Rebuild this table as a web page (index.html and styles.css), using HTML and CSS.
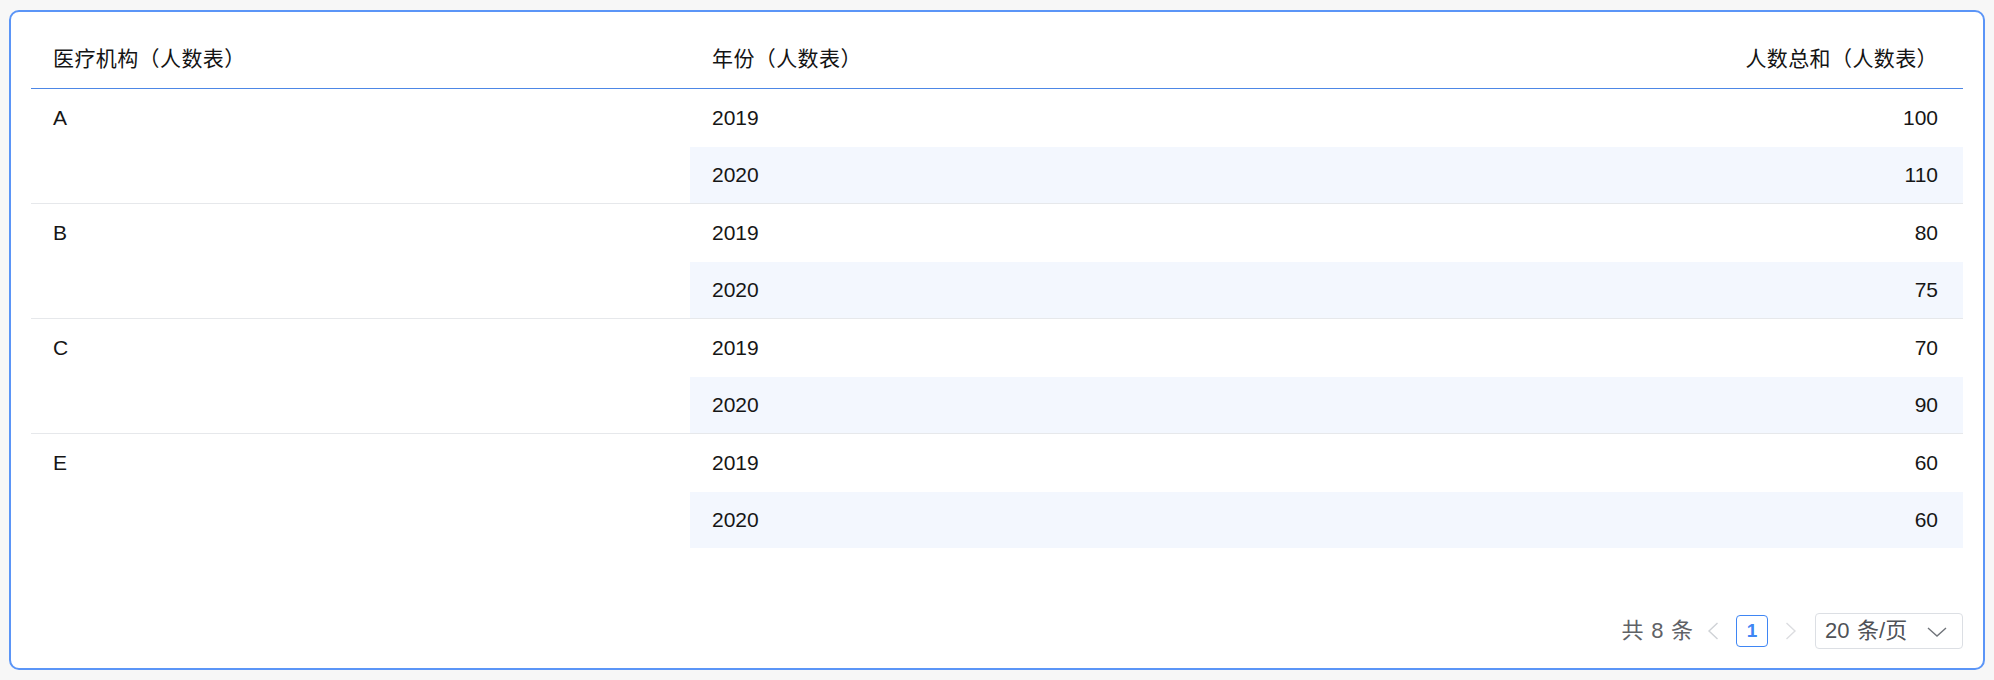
FILE: index.html
```html
<!DOCTYPE html>
<html lang="zh-CN">
<head>
<meta charset="utf-8">
<title>人数表</title>
<link rel="stylesheet" href="styles.css">
</head>
<body>
<div class="card">
  <table class="data-table">
    <colgroup>
      <col class="col-org">
      <col class="col-year">
      <col class="col-sum">
    </colgroup>
    <thead>
      <tr>
        <th class="cell">医疗机构（人数表）</th>
        <th class="cell">年份（人数表）</th>
        <th class="cell num">人数总和（人数表）</th>
      </tr>
    </thead>
    <tbody>
      <tr class="first">
        <td class="cell org" rowspan="2">A</td>
        <td class="cell">2019</td>
        <td class="cell num">100</td>
      </tr>
      <tr class="stripe">
        <td class="cell">2020</td>
        <td class="cell num">110</td>
      </tr>
      <tr class="first">
        <td class="cell org" rowspan="2">B</td>
        <td class="cell">2019</td>
        <td class="cell num">80</td>
      </tr>
      <tr class="stripe">
        <td class="cell">2020</td>
        <td class="cell num">75</td>
      </tr>
      <tr class="first">
        <td class="cell org" rowspan="2">C</td>
        <td class="cell">2019</td>
        <td class="cell num">70</td>
      </tr>
      <tr class="stripe">
        <td class="cell">2020</td>
        <td class="cell num">90</td>
      </tr>
      <tr class="first">
        <td class="cell org last" rowspan="2">E</td>
        <td class="cell">2019</td>
        <td class="cell num">60</td>
      </tr>
      <tr class="stripe last">
        <td class="cell">2020</td>
        <td class="cell num">60</td>
      </tr>
    </tbody>
  </table>

  <div class="pager">
    <span class="total">共 8 条</span>
    <button class="arrow prev" type="button" aria-label="上一页">
      <svg width="12" height="18" viewBox="0 0 12 18"><path d="M10.5 1 L2 9 L10.5 17" fill="none" stroke="currentColor" stroke-width="1.4"/></svg>
    </button>
    <span class="page current">1</span>
    <button class="arrow next" type="button" aria-label="下一页">
      <svg width="12" height="18" viewBox="0 0 12 18"><path d="M1.5 1 L10 9 L1.5 17" fill="none" stroke="currentColor" stroke-width="1.4"/></svg>
    </button>
    <div class="size-select">
      <span class="size-label">20 条/页</span>
      <svg class="caret" width="20" height="10" viewBox="0 0 20 10"><path d="M1 1 L10 9 L19 1" fill="none" stroke="currentColor" stroke-width="1.4"/></svg>
    </div>
  </div>
</div>
</body>
</html>
```

FILE: styles.css
```css
html, body {
  margin: 0;
  height: 100%;
  background: #f7f7f7;
}

body {
  font-family: "Liberation Sans", "Noto Sans CJK SC", sans-serif;
  color: #161616;
  text-spacing-trim: space-all;
}

.card {
  box-sizing: border-box;
  height: calc(100vh - 20px);
  margin: 10px 9px;
  border: 2px solid #5b95f7;
  border-radius: 10px;
  background: #ffffff;
  padding: 19px 20px;
  display: flex;
  flex-direction: column;
}

.data-table {
  width: 100%;
  border-collapse: separate;
  border-spacing: 0;
  table-layout: fixed;
  font-size: 21px;
}

.col-org { width: 659px; }
.col-year { width: 659px; }

.cell {
  padding: 16px 25px 16px 22px;
  line-height: 25px;
  text-align: left;
  font-weight: normal;
  white-space: nowrap;
}

th.cell {
  padding-top: 15px;
  padding-bottom: 16px;
  line-height: 26px;
  border-bottom: 1px solid #4d87e6;
  color: #141414;
  letter-spacing: 0.4px;
}

.first .cell {
  padding-top: 16px;
  padding-bottom: 17px;
}

.num { text-align: right; }

.org {
  vertical-align: top;
  border-bottom: 1px solid #e6e8eb;
}

.org.last { border-bottom: none; }

.stripe .cell {
  padding-top: 15px;
  padding-bottom: 16px;
  background: #f3f7fe;
  border-bottom: 1px solid #e6e8eb;
}

.stripe.last .cell { border-bottom: none; }

.pager {
  margin-top: auto;
  display: flex;
  justify-content: flex-end;
  align-items: center;
  font-size: 22px;
  word-spacing: 1.5px;
  color: #5f6266;
}

.total {
  margin-right: 14px;
  line-height: 36px;
}

.arrow {
  border: none;
  background: none;
  padding: 0;
  width: 12px;
  height: 18px;
  display: flex;
  color: #d3d5d9;
}

.prev { color: #cfd2d6; }
.next { color: #dcdde0; }

.page {
  box-sizing: border-box;
  width: 32px;
  height: 32px;
  margin: 0 17px;
  border: 1px solid #3f86f4;
  border-radius: 4px;
  color: #3f86f4;
  font-size: 19px;
  font-weight: bold;
  display: flex;
  align-items: center;
  justify-content: center;
}

.size-select {
  box-sizing: border-box;
  margin-left: 18px;
  width: 148px;
  height: 36px;
  border: 1px solid #dcdfe4;
  border-radius: 4px;
  display: flex;
  align-items: center;
  justify-content: space-between;
  padding: 0 15px 0 9px;
}

.size-label {
  line-height: 34px;
  color: #4f5257;
}

.caret {
  color: #70747a;
  margin-top: 1px;
}
```
